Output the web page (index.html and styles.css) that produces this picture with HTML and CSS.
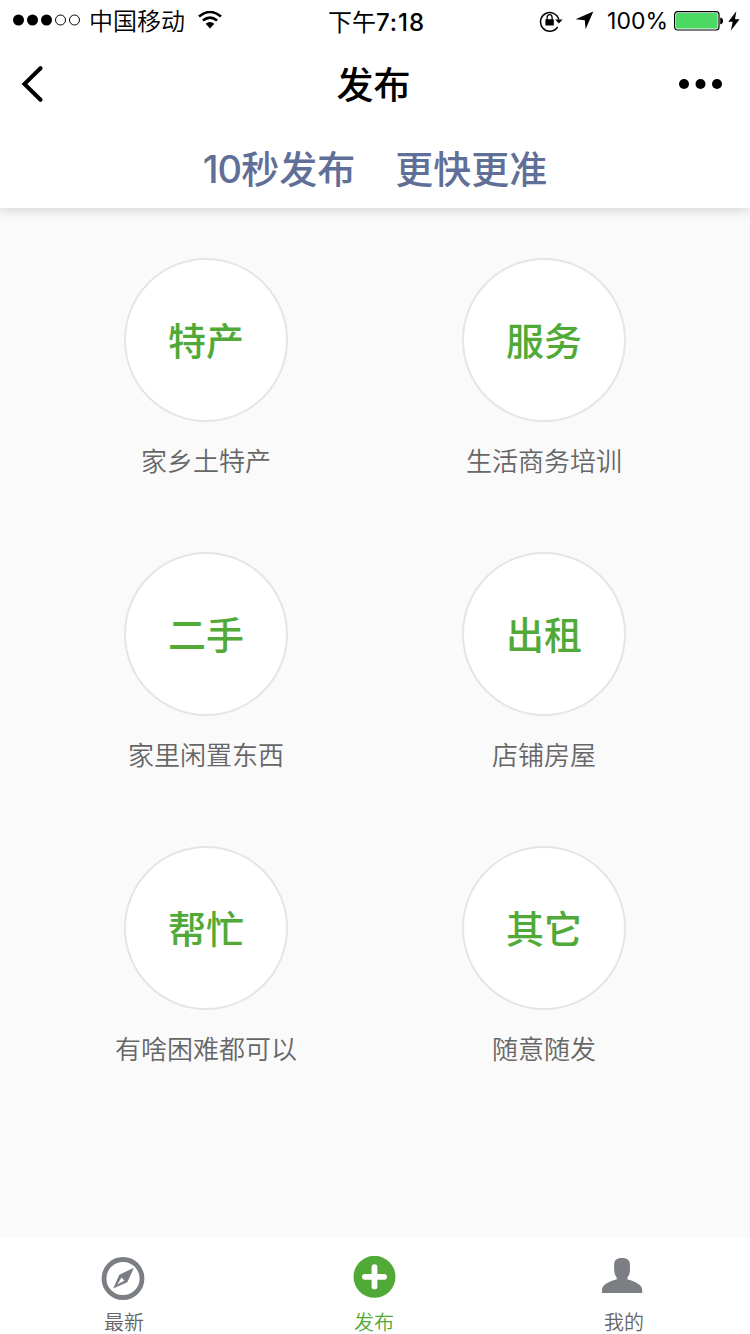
FILE: index.html
```
<!DOCTYPE html>
<html lang="zh-CN">
<head>
	<meta charset="utf-8">
	<title>发布</title>
	<link rel="stylesheet" href="styles.css">
</head>
<body>
<header class="header">
	<div class="status">
		<div class="status-left">
			<svg width="68" height="12" viewBox="0 0 68 12">
				<circle cx="5.5" cy="6" r="5.5"/>
				<circle cx="19.5" cy="6" r="5.5"/>
				<circle cx="33.5" cy="6" r="5.5"/>
				<circle cx="47.5" cy="6" r="5" fill="none" stroke="#000"/>
				<circle cx="61.5" cy="6" r="5" fill="none" stroke="#000"/>
			</svg>
			<span class="carrier">中国移动</span>
			<svg class="wifi" width="24" height="18" viewBox="0 0 24 18">
				<path d="M1 5.6Q12-3.6 23 5.6M4.9 9.6Q12 3.6 19.1 9.6" fill="none" stroke="#000" stroke-width="2.6"/>
				<path d="M7.6 12.8Q12 9.3 16.4 12.8L12 17.4Z"/>
			</svg>
		</div>
		<div class="time"><span>下午</span>7:18</div>
		<div class="status-right">
			<svg width="24" height="22" viewBox="0 0 24 22">
				<path d="M18.6 17A9.3 9.3 0 1 1 19.8 9.5" fill="none" stroke="#000" stroke-width="1.5"/>
				<path d="M16.2 9.6h7.4l-3.7 4z"/>
				<rect x="6.4" y="9.2" width="8.4" height="6.4" rx=".5"/>
				<path d="M8.1 10V7.6a2.5 2.9 0 0 1 5 0V10" fill="none" stroke="#000" stroke-width="1.3"/>
			</svg>
			<svg class="arrow" width="19" height="19" viewBox="0 0 19 19"><path d="M18.3.6L10.6 18.3 9.8 9.2.5 8.3z"/></svg>
			<span class="percent">100%</span>
			<svg width="50" height="20" viewBox="0 0 50 20">
				<rect x=".6" y=".6" width="44.4" height="18.4" rx="3" fill="#fff" stroke="#000" stroke-width="1.2"/>
				<rect x="2" y="2" width="41.6" height="15.6" rx="1.5" fill="#4cd964"/>
				<path d="M46.2 6.5Q49 7 49 9.9T46.2 13.3z"/>
			</svg>
			<svg class="bolt" width="12" height="20" viewBox="0 0 12 20"><path d="M8.3.3L.3 10.8h4.4L2.9 19.6 11.6 8.3H7z"/></svg>
		</div>
	</div>
	<nav class="nav">
		<svg width="22" height="36" viewBox="0 0 22 36"><path d="M19.5 2.2L3.4 18 19.5 33.8" fill="none" stroke="#000" stroke-width="4" stroke-linecap="round"/></svg>
		<h1>发布</h1>
		<svg width="44" height="10" viewBox="0 0 44 10"><circle cx="5" cy="5" r="5"/><circle cx="21.5" cy="5" r="5"/><circle cx="38" cy="5" r="5"/></svg>
	</nav>
	<p class="slogan"><span><b>10</b>秒发布</span><span>更快更准</span></p>
</header>

<main class="list">
	<div class="item">
		<a class="circle">特产</a>
		<p>家乡土特产</p>
	</div>
	<div class="item">
		<a class="circle">服务</a>
		<p>生活商务培训</p>
	</div>
	<div class="item">
		<a class="circle">二手</a>
		<p>家里闲置东西</p>
	</div>
	<div class="item">
		<a class="circle">出租</a>
		<p>店铺房屋</p>
	</div>
	<div class="item">
		<a class="circle">帮忙</a>
		<p>有啥困难都可以</p>
	</div>
	<div class="item">
		<a class="circle">其它</a>
		<p>随意随发</p>
	</div>
</main>

<footer class="tabbar">
	<a class="tab">
		<svg width="46" height="44" viewBox="0 0 46 44">
			<circle cx="22" cy="22.5" r="19" fill="none" stroke="#7b7f84" stroke-width="4.8"/>
			<path fill-rule="evenodd" d="M33 11.7L26.3 26.3 12.2 32.6 18.3 18.7zM20.5 21.4L16.4 28.6 23.4 24.6z" fill="#7b7f84"/>
		</svg>
		<span>最新</span>
	</a>
	<a class="tab active">
		<svg width="44" height="44" viewBox="0 0 44 44">
			<circle cx="22.5" cy="20.8" r="21" fill="#51aa38"/>
			<path d="M22.5 11.2v19.2M12.9 20.8h19.2" stroke="#fff" stroke-width="5.8" stroke-linecap="round"/>
		</svg>
		<span>发布</span>
	</a>
	<a class="tab">
		<svg width="46" height="44" viewBox="0 0 46 44">
			<path d="M21 2C26.5 2 29 4.5 29 9C29 14 29.3 18 26.5 21.5V23.5C35 25.5 41.2 29 41.2 34V37H1V34C1 29 7 25.5 15.7 23.5V21.5C12.9 18 13.1 14 13.1 9C13.1 4.5 15.5 2 21 2z" fill="#7b7f84"/>
		</svg>
		<span>我的</span>
	</a>
</footer>
</body>
</html>
```
FILE: styles.css
```
* {
	box-sizing: border-box;
	margin: 0;
	padding: 0;
}

body {
	display: flex;
	flex-direction: column;
	height: 1334px;
	font-family: "Noto Sans CJK SC DemiLight", "Noto Sans CJK SC", sans-serif;
	font-weight: 350;
	background-color: #fafafa;
	color: #000;
}

svg {
	display: block;
	flex: none;
}

.header {
	height: 208px;
	background-color: #fff;
	box-shadow: 0 2px 12px rgba(0, 0, 0, 0.16);
}

/* status bar */
.status {
	display: grid;
	grid-template-columns: 1fr auto 1fr;
	height: 40px;
	font-size: 24px;
	line-height: 40px;
	padding: 0 10px 0 13px;
}

.status-left, .status-right {
	display: flex;
	align-items: center;
	height: 40px;
}

.status-right {
	justify-content: flex-end;
	height: 41px;
}

.carrier {
	margin: 0 13px 0 8px;
	line-height: 38px;
}

.time {
	padding-top: 1px;
	font-family: Inter, sans-serif;
	font-weight: 500;
	letter-spacing: 0.9px;
}

.time span {
	font-family: "Noto Sans CJK SC", sans-serif;
	font-weight: 400;
	letter-spacing: 0;
}

.arrow {
	margin: 0 13px 0 12px;
}

.percent {
	margin-right: 6px;
	font-family: Inter, sans-serif;
	font-weight: 400;
	font-size: 23px;
}

.bolt {
	margin-left: 4px;
}

/* title bar */
.nav {
	display: flex;
	align-items: center;
	justify-content: space-between;
	height: 88px;
	padding: 0 27px 0 21px;
}

.nav h1 {
	margin: -2px 0 0 25px;
	font-family: "Noto Sans CJK SC", sans-serif;
	font-size: 37px;
	font-weight: 500;
}

.slogan {
	display: flex;
	justify-content: center;
	gap: 40px;
	font-family: "Noto Sans CJK SC", sans-serif;
	font-size: 38px;
	font-weight: 500;
	line-height: 78px;
	color: #5f6f98;
}

.slogan b {
	font-family: Inter, sans-serif;
	font-weight: 500;
	letter-spacing: -1px;
}

/* categories */
.list {
	display: grid;
	grid-template-columns: 338px 338px;
	grid-auto-rows: 294px;
	flex: 1;
	padding: 50px 37px 0;
}

.item {
	display: flex;
	flex-direction: column;
	align-items: center;
}

.circle {
	width: 164px;
	height: 164px;
	border: 2px solid #e5e5e5;
	border-radius: 50%;
	background-color: #fff;
	font-family: "Noto Sans CJK SC", sans-serif;
	font-size: 38px;
	font-weight: 500;
	line-height: 158px;
	text-align: center;
	color: #51aa38;
}

.item p {
	margin-top: 18px;
	font-size: 26px;
	line-height: 40px;
	color: #666;
}

.tabbar {
	display: flex;
	height: 96px;
	padding: 18px 1px 0 0;
	margin-left: -1px;
	background-color: #fff;
}

.tab {
	display: flex;
	flex: 1;
	flex-direction: column;
	align-items: center;
	font-size: 20px;
	line-height: 44px;
	color: #666;
}

.tab.active {
	color: #51aa38;
}
```
